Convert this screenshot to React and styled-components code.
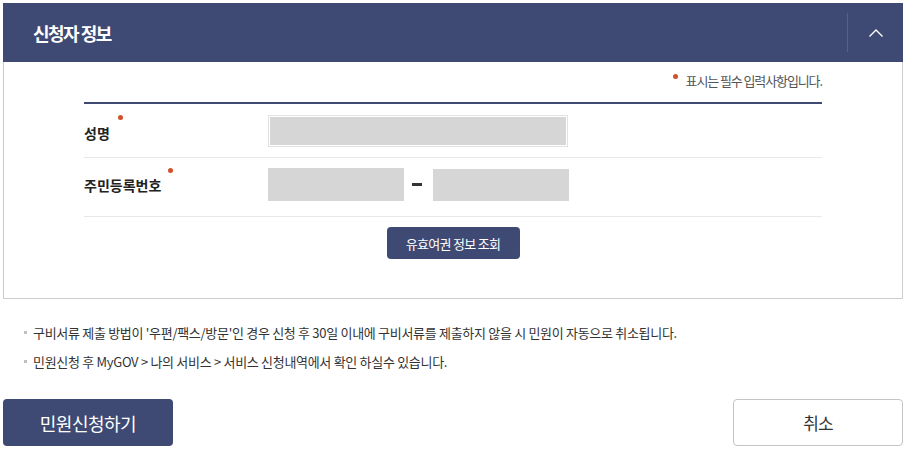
import React from "react";
import styled, { createGlobalStyle } from "styled-components";

const NAVY = "#3e4a73";

const GlobalStyle = createGlobalStyle`
  html, body {
    margin: 0;
    padding: 0;
    background: #ffffff;
  }
  body {
    font-family: "Noto Sans CJK KR", "Noto Sans", sans-serif;
    color: #333333;
  }
  * {
    box-sizing: border-box;
  }
`;

const Page = styled.div`
  width: 906px;
  padding: 3px;
`;

const Panel = styled.section`
  width: 900px;
`;

const Header = styled.header`
  height: 59px;
  background: ${NAVY};
  display: flex;
  align-items: center;
  justify-content: space-between;
  padding-left: 30px;
`;

const Title = styled.h2`
  margin: 0;
  font-size: 18px;
  font-weight: 700;
  letter-spacing: -1.5px;
  color: #ffffff;
`;

const Toggle = styled.button`
  width: 56px;
  height: 39px;
  border: none;
  border-left: 1px solid #56608a;
  background: transparent;
  display: flex;
  align-items: center;
  justify-content: center;
  padding: 0;
  cursor: pointer;
`;

const Body = styled.div`
  border: 1px solid #cccccc;
  border-top: none;
  padding: 0 80px 39px;
`;

const RequiredNote = styled.p`
  margin: 0;
  height: 40px;
  padding-top: 9px;
  text-align: right;
  font-size: 13px;
  line-height: 20px;
  letter-spacing: -1.1px;
  color: #555555;
`;

const Mark = styled.i`
  display: inline-block;
  width: 5px;
  height: 5px;
  border-radius: 50%;
  background: #d2502c;
  vertical-align: top;
  position: relative;
  top: ${(p) => p.$top}px;
  margin-left: ${(p) => p.$ml}px;
  margin-right: ${(p) => p.$mr || 0}px;
`;

const Table = styled.div`
  border-top: 2px solid ${NAVY};
`;

const Row = styled.div`
  display: grid;
  grid-template-columns: 184px 1fr;
  align-items: start;
  height: ${(p) => p.$h}px;
  padding-top: ${(p) => p.$pt}px;
  border-bottom: 1px solid #e8e8e8;
`;

const Label = styled.div`
  font-size: 14px;
  font-weight: 700;
  letter-spacing: 0;
  color: #222222;
  line-height: 20px;
  padding-top: ${(p) => p.$pt}px;
`;

const Fields = styled.div`
  display: flex;
  align-items: center;
`;

const Field = styled.div`
  width: ${(p) => p.$w}px;
  height: ${(p) => p.$h}px;
  background: #d6d6d6;
  border: ${(p) => (p.$framed ? "1px solid #e2e2e2" : "none")};
  box-shadow: ${(p) => (p.$framed ? "inset 0 0 0 1px #ffffff" : "none")};
`;

const Dash = styled.span`
  width: 10px;
  height: 3px;
  background: #333333;
  margin: 0 11px 0 8px;
`;

const Actions = styled.div`
  display: flex;
  justify-content: center;
  padding-top: 10px;
`;

const SmallButton = styled.button`
  height: 32px;
  width: 133px;
  border: none;
  border-radius: 4px;
  background: ${NAVY};
  color: #ffffff;
  font-family: inherit;
  font-size: 13px;
  letter-spacing: -0.7px;
  cursor: pointer;
`;

const Notes = styled.ul`
  list-style: none;
  margin: 24px 0 0;
  padding: 0 0 0 21px;
  display: flex;
  flex-direction: column;
  gap: 10px;
`;

const Note = styled.li`
  display: flex;
  align-items: center;
  font-size: 13px;
  line-height: 19px;
  letter-spacing: -0.3px;
  color: #333333;
  &::before {
    content: "";
    width: 3px;
    height: 3px;
    background: #c0c0c0;
    margin-right: 6px;
    flex-shrink: 0;
  }
`;

const Footer = styled.div`
  display: flex;
  justify-content: space-between;
  margin-top: 28px;
`;

const BigButton = styled.button`
  width: 170px;
  height: 47px;
  border-radius: 4px;
  font-family: inherit;
  font-size: ${(p) => (p.$primary ? 18 : 17)}px;
  letter-spacing: ${(p) => (p.$primary ? -0.5 : -1)}px;
  background: ${(p) => (p.$primary ? NAVY : "#ffffff")};
  color: ${(p) => (p.$primary ? "#ffffff" : "#333333")};
  border: ${(p) => (p.$primary ? "none" : "1px solid #c4c4c4")};
  cursor: pointer;
`;

const Chevron = () => (
  <svg width="16" height="10" viewBox="0 0 16 10">
    <path d="M1.5 8.5 L8 2 L14.5 8.5" fill="none" stroke="#ffffff" strokeWidth="1.4" />
  </svg>
);

export default function App() {
  return (
    <Page>
      <GlobalStyle />
      <Panel>
        <Header>
          <Title>신청자 정보</Title>
          <Toggle aria-label="접기">
            <Chevron />
          </Toggle>
        </Header>
        <Body>
          <RequiredNote>
            <Mark $top={3} $ml={0} $mr={8} />
            표시는 필수 입력사항입니다.
          </RequiredNote>
          <Table>
            <Row $h={54} $pt={11}>
              <Label $pt={8}>
                성명
                <Mark $top={-8} $ml={8} />
              </Label>
              <Fields>
                <Field $w={300} $h={32} $framed />
              </Fields>
            </Row>
            <Row $h={59} $pt={10}>
              <Label $pt={7}>
                주민등록번호
                <Mark $top={-7} $ml={7} />
              </Label>
              <Fields>
                <Field $w={136} $h={33} />
                <Dash />
                <Field $w={136} $h={32} />
              </Fields>
            </Row>
          </Table>
          <Actions>
            <SmallButton>유효여권 정보 조회</SmallButton>
          </Actions>
        </Body>
      </Panel>
      <Notes>
        <Note>
          구비서류 제출 방법이 '우편/팩스/방문'인 경우 신청 후 30일 이내에 구비서류를 제출하지 않을 시 민원이 자동으로 취소됩니다.
        </Note>
        <Note>민원신청 후 MyGOV &gt; 나의 서비스 &gt; 서비스 신청내역에서 확인 하실수 있습니다.</Note>
      </Notes>
      <Footer>
        <BigButton $primary>민원신청하기</BigButton>
        <BigButton>취소</BigButton>
      </Footer>
    </Page>
  );
}
